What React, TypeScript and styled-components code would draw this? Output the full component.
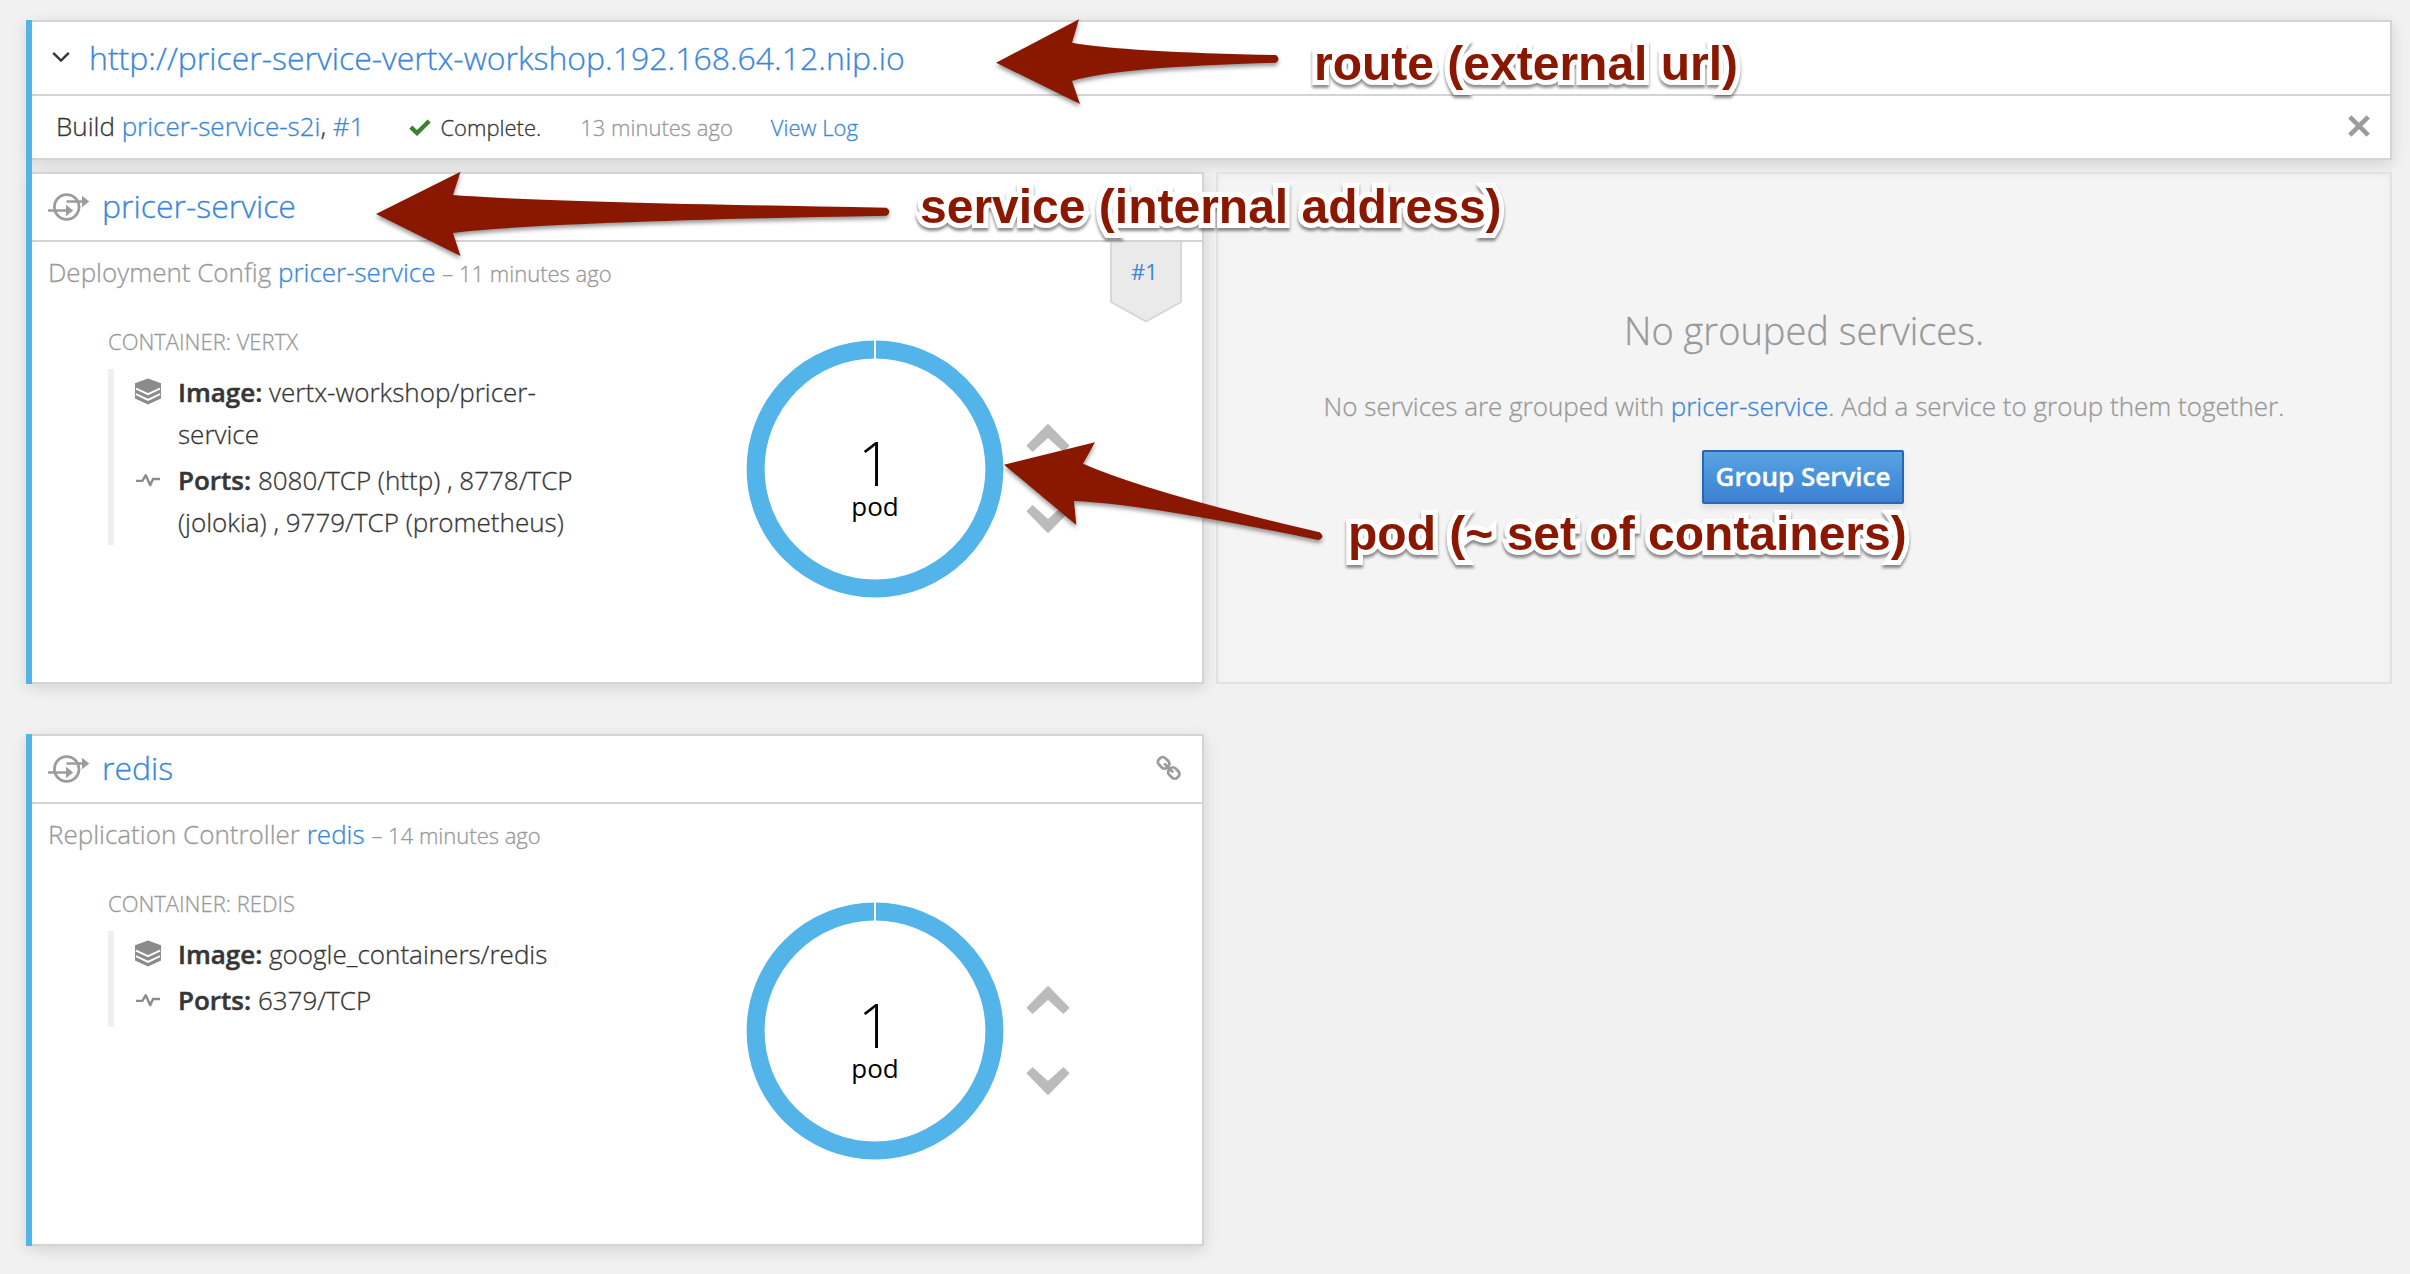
import React from "react";
import styled, { createGlobalStyle } from "styled-components";

const GlobalStyle = createGlobalStyle`
  * { box-sizing: border-box; }
  body {
    margin: 0;
    background: #f1f1f1;
    color: #363636;
    font-family: "Open Sans", "Noto Sans", sans-serif;
    font-size: 26px;
    font-weight: 300;
    -webkit-text-stroke: 0.3px currentColor;
  }
`;

const Page = styled.main`
  position: relative;
  display: flex;
  flex-direction: column;
  align-items: flex-start;
  gap: 50px;
  width: 2410px;
  height: 1274px;
  padding: 20px 18px 28px 26px;
  overflow: hidden;
`;

const Group = styled.section<{ $width: number }>`
  position: relative;
  display: flex;
  flex-direction: column;
  gap: 12px;
  width: ${(p) => p.$width}px;
  padding-left: 6px;

  &::before {
    content: "";
    position: absolute;
    inset: 0 auto 0 0;
    width: 6px;
    background: #52b4e8;
    box-shadow: -3px 4px 12px rgba(0, 0, 0, 0.08);
    z-index: 1;
  }
`;

const Columns = styled.div`
  display: flex;
  gap: 12px;
`;

const Card = styled.article`
  position: relative;
  background: #fff;
  border: 2px solid #d4d4d4;
  border-left: 0;
  box-shadow: 0 4px 14px rgba(0, 0, 0, 0.13);
`;

const ServiceCardBox = styled(Card)`
  width: 1172px;
  height: 512px;
`;

const Link = styled.a`
  color: #3a87d9;
  text-decoration: none;
`;

const RouteHeader = styled.header`
  display: flex;
  align-items: center;
  height: 74px;
  padding: 0 0 2px 20px;
  gap: 19px;
  border-bottom: 2px solid #d4d4d4;
  font-size: 32px;
`;

const BuildRow = styled.div`
  display: flex;
  align-items: baseline;
  height: 62px;
  padding: 0 20px 0 24px;
  line-height: 60px;
`;

const Status = styled.span`
  display: flex;
  align-items: baseline;
  gap: 9px;
  margin-left: 45px;
  font-size: 22px;
`;

const Small = styled.span`
  font-size: 22px;
`;

const Ago = styled.span`
  margin-left: 39px;
  font-size: 22px;
  color: #999;
`;

const LogLink = styled(Link)`
  margin-left: 38px;
  font-size: 22px;
`;

const CloseButton = styled.button`
  align-self: center;
  display: flex;
  margin: 0 0 2px auto;
  padding: 0;
  border: 0;
  background: none;
`;

const ServiceHeader = styled.header`
  display: flex;
  align-items: center;
  height: 68px;
  padding: 0 20px 4px 16px;
  gap: 11px;
  border-bottom: 2px solid #d4d4d4;
  font-size: 32px;

  & > svg {
    margin-top: 3px;
  }
`;

const HeaderTool = styled.span`
  display: flex;
  margin: 2px 0 0 auto;
`;

const Owner = styled.div`
  padding-left: 16px;
  line-height: 60px;
  color: #999;
`;

const Body = styled.div`
  display: flex;
`;

const Containers = styled.div`
  width: 713px;
  padding: 12px 148px 0 76px;
`;

const ContainerLabel = styled.div`
  font-size: 22px;
  line-height: 53px;
  color: #999;
  text-transform: uppercase;
`;

const Details = styled.div<{ $tail: number }>`
  display: flex;
  flex-direction: column;
  gap: 4px;
  margin-top: 1px;
  padding: 2px 0 ${(p) => p.$tail}px 21px;
  border-left: 6px solid #f0f0f0;
`;

const Detail = styled.div`
  display: flex;
  gap: 17px;
  line-height: 42px;

  & > svg {
    flex: none;
    margin-top: 7px;
  }
`;

const Strong = styled.b`
  font-weight: 600;
  -webkit-text-stroke-width: 0.5px;
`;

const Donut = styled.svg`
  flex: none;
  margin-top: 36px;
`;

const Scaler = styled.div`
  display: flex;
  flex-direction: column;
  gap: 51px;
  padding: 120px 0 0 20px;
`;

const Badge = styled.svg`
  position: absolute;
  top: 68px;
  right: 19px;
`;

const EmptyPanel = styled.aside`
  display: flex;
  flex-direction: column;
  align-items: center;
  width: 1176px;
  height: 512px;
  padding-top: 125px;
  background: #f4f4f4;
  border: 2px solid #e2e2e2;
  box-shadow: inset 0 2px 6px rgba(0, 0, 0, 0.04);
  color: #999;
  position: relative;
`;

const EmptyTitle = styled.h2`
  margin: 0;
  font-size: 38px;
  font-weight: 300;
  line-height: 62px;
`;

const EmptyText = styled.p`
  margin: 14px 0 13px;
  line-height: 62px;
`;

const PrimaryButton = styled.button`
  width: 202px;
  height: 54px;
  margin-right: 2px;
  padding: 0 0 2px;
  border: 2px solid #2a66ae;
  border-radius: 2px;
  background: linear-gradient(#5ba2e0, #4a96dd 40%, #3e80d3);
  box-shadow: 0 4px 6px rgba(0, 0, 0, 0.1);
  color: #fff;
  font: 600 26px "Open Sans", sans-serif;
  white-space: nowrap;
  -webkit-text-stroke: 0.4px #fff;
`;

const Arrows = styled.svg`
  position: absolute;
  inset: 0;
  z-index: 2;
  filter: drop-shadow(0 3px 2px rgba(0, 0, 0, 0.4));
`;

const Note = styled.div<{ $x: number; $y: number }>`
  position: absolute;
  left: ${(p) => p.$x}px;
  top: ${(p) => p.$y}px;
  z-index: 3;
  color: #8a1800;
  font: 700 48px/56px "Liberation Sans", Arial, sans-serif;
  white-space: nowrap;
  -webkit-text-stroke: 10px #fff;
  paint-order: stroke fill;
  stroke-linejoin: round;
  filter: drop-shadow(0 3px 1.5px rgba(0, 0, 0, 0.45));
`;

const ServiceIcon = () => (
  <svg width="43" height="30" viewBox="0 0 43 30" fill="none" stroke="#9c9c9c">
    <circle cx="18.7" cy="15" r="12.3" strokeWidth="2.8" />
    <path d="M18.5 9.5H36M0 18.5H20" strokeWidth="2.5" />
    <path d="M34 3.8L41.2 9.5L34 15.2ZM18 12.8L25.2 18.5L18 24.2Z" fill="#9c9c9c" stroke="none" />
  </svg>
);

const ImageIcon = () => (
  <svg width="26" height="28" viewBox="0 0 26 28" fill="#8b8b8b">
    <path d="M13 0.5L26 5.2V11.5L13 17.5L0 11.5V5.2Z" />
    <path d="M0 11V20.5L13 26.5L26 20.5V11Z" />
    <path d="M1 10.6L13 16.2L25 10.6M1 16.2L13 21.8L25 16.2" fill="none" stroke="#fff" strokeWidth="2" />
  </svg>
);

const PortsIcon = () => (
  <svg width="26" height="28" viewBox="0 0 26 28" fill="none" stroke="#8b8b8b" strokeWidth="2.4">
    <path d="M1 14.9H7.4L10.8 9.2L15.2 19.2L18 13H25" strokeLinejoin="round" />
  </svg>
);

const ChainIcon = () => (
  <svg width="26" height="26" viewBox="0 0 26 26" fill="none" stroke="#9c9c9c" strokeWidth="2.8">
    <rect x="1.8" y="3.3" width="11.6" height="9" rx="3.8" transform="rotate(45 7.6 7.8)" />
    <rect x="12" y="13.5" width="11.6" height="9" rx="3.8" transform="rotate(45 17.8 18)" />
    <path d="M9 9.2L16.4 16.6" strokeLinecap="round" />
  </svg>
);

const Chevron = ({ down }: { down?: boolean }) => (
  <svg width="46" height="30" viewBox="0 0 46 30">
    <path
      d="M23 1.8L43.6 22.8L38.4 28L23 13.8L7.6 28L2.4 22.8Z"
      transform={down ? "rotate(180 23 15)" : undefined}
      fill="#bbb"
      stroke="#bbb"
      strokeWidth="1.6"
      strokeLinejoin="round"
    />
  </svg>
);

const PodDonut = ({ count }: { count: number }) => (
  <Donut width="260" height="260" viewBox="0 0 260 260">
    <circle cx="130" cy="130" r="119.4" fill="none" stroke="#52b4e8" strokeWidth="18" />
    <path d="M130 0V22" stroke="#fff" strokeWidth="2" />
    <text x="130" y="146.5" textAnchor="middle" fontSize="60" fontWeight="300" fill="#000">
      {count}
    </text>
    <text x="130" y="176.5" textAnchor="middle" fontSize="26" fontWeight="400" fill="#000">
      pod
    </text>
  </Donut>
);

interface ServiceProps {
  name: string;
  kind: string;
  age: string;
  container: string;
  image: string;
  ports: string;
  tail: number;
  badge?: string;
  chain?: boolean;
}

const ServiceCard = ({ name, kind, age, container, image, ports, tail, badge, chain }: ServiceProps) => (
  <ServiceCardBox>
    <ServiceHeader>
      <ServiceIcon />
      <Link>{name}</Link>
      {chain && (
        <HeaderTool>
          <ChainIcon />
        </HeaderTool>
      )}
    </ServiceHeader>
    <Owner>
      {kind} <Link>{name}</Link> <Small>– {age}</Small>
    </Owner>
    <Body>
      <Containers>
        <ContainerLabel>Container: {container}</ContainerLabel>
        <Details $tail={tail}>
          <Detail>
            <ImageIcon />
            <span>
              <Strong>Image:</Strong> {image}
            </span>
          </Detail>
          <Detail>
            <PortsIcon />
            <span>
              <Strong>Ports:</Strong> {ports}
            </span>
          </Detail>
        </Details>
      </Containers>
      <PodDonut count={1} />
      <Scaler>
        <Chevron />
        <Chevron down />
      </Scaler>
    </Body>
    {badge && (
      <Badge width="74" height="82" viewBox="0 0 74 82">
        <path d="M2 0V60L37 79.5L72 60V0" fill="#eaeaea" stroke="#d5d5d5" strokeWidth="1.8" />
        <text x="35.5" y="38" textAnchor="middle" fontSize="22" fontWeight="400" fill="#3a87d9">
          {badge}
        </text>
      </Badge>
    )}
  </ServiceCardBox>
);

export default function App() {
  return (
    <Page>
      <GlobalStyle />
      <Group $width={2366}>
        <Card>
          <RouteHeader>
            <svg width="18" height="12" viewBox="0 0 18 12" fill="none" stroke="#363636" strokeWidth="2.4">
              <path d="M1.2 1.8L9 9.6L16.8 1.8" />
            </svg>
            <Link>http://pricer-service-vertx-workshop.192.168.64.12.nip.io</Link>
          </RouteHeader>
          <BuildRow>
            <span>
              Build <Link>pricer-service-s2i</Link>, <Link>#1</Link>
            </span>
            <Status>
              <svg width="22" height="17" viewBox="0 0 22 17" fill="none" stroke="#3f7f35" strokeWidth="4.4">
                <path d="M1.8 8.2L8 14L20.2 2" />
              </svg>
              Complete.
            </Status>
            <Ago>13 minutes ago</Ago>
            <LogLink>View Log</LogLink>
            <CloseButton aria-label="Dismiss">
              <svg width="22" height="22" viewBox="0 0 22 22" stroke="#9c9c9c" strokeWidth="4.6">
                <path d="M1.8 1.8L20.2 20.2M20.2 1.8L1.8 20.2" />
              </svg>
            </CloseButton>
          </BuildRow>
        </Card>
        <Columns>
          <ServiceCard
            name="pricer-service"
            kind="Deployment Config"
            age="11 minutes ago"
            container="vertx"
            image="vertx-workshop/pricer-service"
            ports="8080/TCP (http) , 8778/TCP (jolokia) , 9779/TCP (prometheus)"
            tail={2}
            badge="#1"
          />
          <EmptyPanel>
            <EmptyTitle>No grouped services.</EmptyTitle>
            <EmptyText>
              No services are grouped with <Link>pricer-service</Link>. Add a service to group them together.
            </EmptyText>
            <PrimaryButton>Group Service</PrimaryButton>
          </EmptyPanel>
        </Columns>
      </Group>
      <Group $width={1178}>
        <ServiceCard
          name="redis"
          kind="Replication Controller"
          age="14 minutes ago"
          container="redis"
          image="google_containers/redis"
          ports="6379/TCP"
          tail={6}
          chain
        />
      </Group>
      <Arrows width="2410" height="1274" viewBox="0 0 2410 1274" fill="#8a1800">
        <path d="M996 62.7L1079 19.3L1072 42.7Q1125 52 1276 55Q1281 59 1276 62.7Q1115 67 1072 81L1080 104Z" />
        <path d="M376 214L460.5 171.7L453 195Q540 202 886.7 207.7Q892 211.7 886.7 215.7Q540 222 453 233L460.5 256Z" />
        <path d="M1004 464.7L1095 442.3L1083 463.7Q1150 493 1319.6 532.3Q1326 537 1318.3 540Q1145 504 1074 501L1076.3 525Z" />
      </Arrows>
      <Note $x={1314} $y={36}>route (external url)</Note>
      <Note $x={920} $y={179}>service (internal address)</Note>
      <Note $x={1348} $y={506}>pod (~ set of containers)</Note>
    </Page>
  );
}
